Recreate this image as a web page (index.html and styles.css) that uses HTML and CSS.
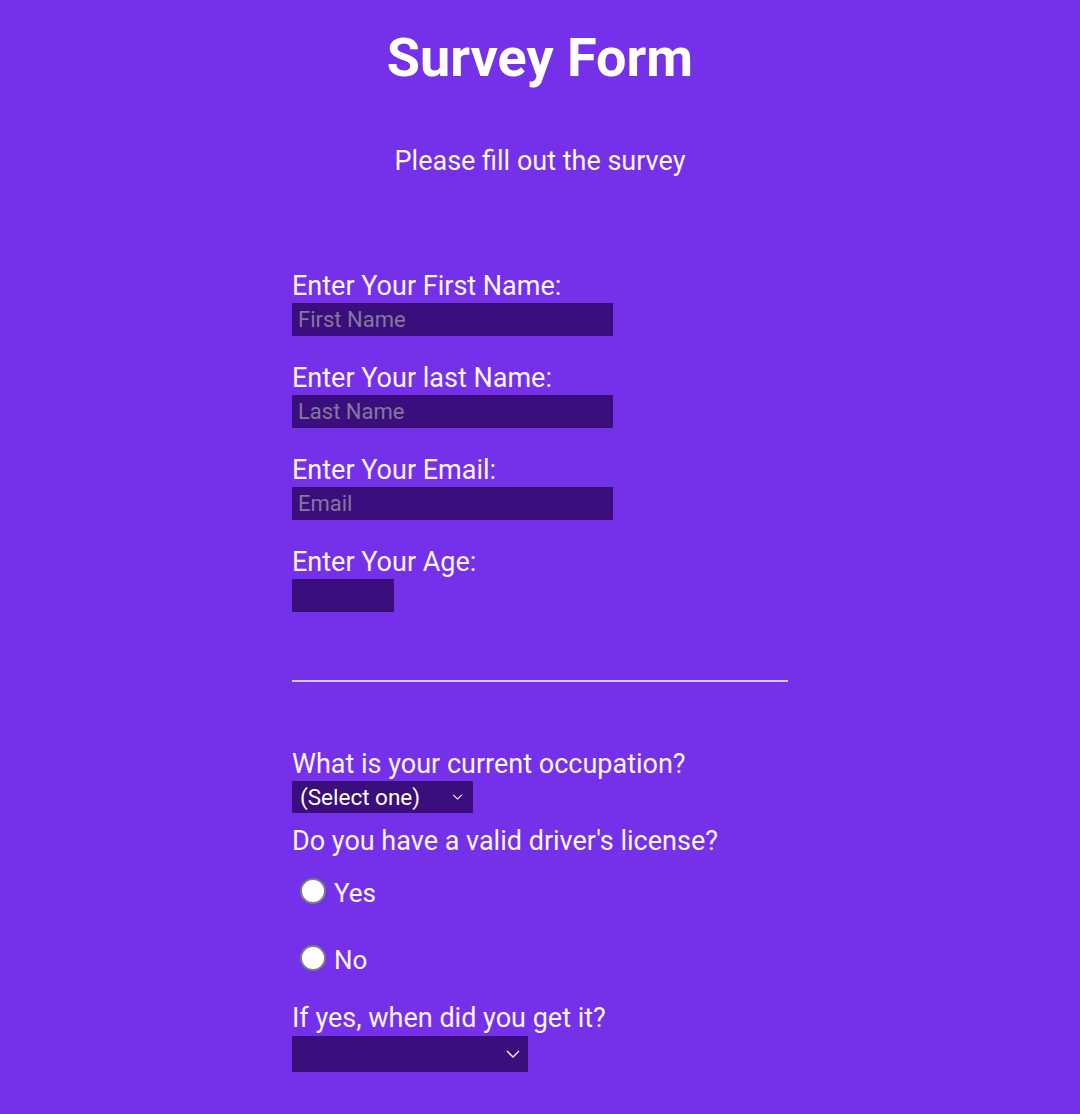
FILE: index.html
```html
<!DOCTYPE html>
<html lang="en">
<head>
<meta charset="utf-8">
<title>Survey Form</title>
<link rel="stylesheet" href="styles.css">
</head>
<body>
<header class="head">
  <h1 class="title">Survey Form</h1>
  <p class="subtitle">Please fill out the survey</p>
</header>
<form class="form">
  <div class="field">
    <label class="label" for="fname">Enter Your First Name:</label>
    <input class="text-input" id="fname" type="text" placeholder="First Name">
  </div>
  <div class="field">
    <label class="label" for="lname">Enter Your last Name:</label>
    <input class="text-input" id="lname" type="text" placeholder="Last Name">
  </div>
  <div class="field">
    <label class="label" for="email">Enter Your Email:</label>
    <input class="text-input" id="email" type="email" placeholder="Email">
  </div>
  <div class="field">
    <label class="label" for="age">Enter Your Age:</label>
    <input class="text-input age" id="age" type="number">
  </div>
  <div class="rule"></div>
  <div class="field-occ">
    <label class="label" for="occ">What is your current occupation?</label>
    <span class="select-wrap occ">
      <select class="select" id="occ">
        <option>(Select one)</option>
        <option>Student</option>
        <option>Employed</option>
        <option>Other</option>
      </select>
      <svg class="chev" width="12" height="7" viewBox="0 0 12 7"><path d="M1 1l5 5 5-5" fill="none" stroke="#fff" stroke-width="1.2"/></svg>
    </span>
  </div>
  <p class="label question">Do you have a valid driver's license?</p>
  <label class="radio-row first"><input class="radio" type="radio" name="lic"><span>Yes</span></label>
  <label class="radio-row second"><input class="radio" type="radio" name="lic"><span>No</span></label>
  <div class="field-when">
    <label class="label" for="when">If yes, when did you get it?</label>
    <span class="select-wrap when">
      <select class="select" id="when">
        <option></option>
      </select>
      <svg class="chev big" width="14" height="8" viewBox="0 0 14 8"><path d="M1 1l6 6 6-6" fill="none" stroke="#fff" stroke-width="1.3"/></svg>
    </span>
  </div>
</form>
</body>
</html>
```
FILE: styles.css
```css
html, body {
  margin: 0;
  padding: 0;
}
body {
  background: #7530e9;
  color: #fbf5ff;
  font-family: Roboto, "Noto Sans", sans-serif;
  padding-top: 26px;
  min-height: 1114px;
  box-sizing: border-box;
}
.head {
  text-align: center;
}
.title {
  margin: 0;
  font-size: 54px;
  line-height: 64px;
  font-weight: 700;
  color: #ffffff;
}
.subtitle {
  margin: 55px 0 0;
  font-size: 27px;
  line-height: 33px;
}
.form {
  width: 496px;
  margin: 93px auto 0;
}
.label {
  display: block;
  font-size: 27px;
  line-height: 31px;
  margin: 0;
}
.field {
  margin-bottom: 27px;
}
.text-input {
  display: block;
  box-sizing: border-box;
  width: 321px;
  height: 33px;
  margin-top: 1px;
  border: none;
  background: #3a0e7c;
  color: #fff;
  font-family: Roboto, sans-serif;
  font-size: 22px;
  padding: 0 6px;
  outline: none;
}
.text-input::placeholder {
  color: #85789b;
}
.text-input.age {
  width: 102px;
  -moz-appearance: textfield;
}
.text-input.age::-webkit-inner-spin-button,
.text-input.age::-webkit-outer-spin-button {
  -webkit-appearance: none;
  margin: 0;
}
.rule {
  height: 2px;
  background: #d6c6f6;
  margin-top: 68px;
}
.field-occ {
  margin-top: 67px;
}
.select-wrap {
  position: relative;
  display: block;
  margin-top: 1px;
}
.select {
  display: block;
  box-sizing: border-box;
  appearance: none;
  -webkit-appearance: none;
  border: none;
  border-radius: 0;
  background: #3a0e7c;
  color: #fff;
  font-family: Roboto, sans-serif;
  font-size: 22.5px;
  padding: 0 0 0 8px;
  outline: none;
}
.occ .select {
  width: 181px;
  height: 32px;
}
.when {
  margin-top: 2px;
}
.when .select {
  width: 236px;
  height: 36px;
}
.chev {
  position: absolute;
  top: 13px;
}
.occ .chev {
  left: 160px;
  top: 13px;
  width: 11px;
  height: 6px;
}
.when .chev {
  left: 214px;
  top: 14px;
}
.question {
  margin-top: 13px;
}
.radio-row {
  display: flex;
  align-items: flex-start;
  gap: 8px;
  padding-left: 8px;
  font-size: 26px;
  line-height: 31px;
}
.radio-row.first {
  margin-top: 21px;
}
.radio-row.second {
  margin-top: 36px;
}
.radio {
  appearance: none;
  -webkit-appearance: none;
  box-sizing: border-box;
  width: 26px;
  height: 26px;
  margin: 0;
  border: 2px solid #7d7d85;
  border-radius: 50%;
  background: #ffffff;
}
.field-when {
  margin-top: 27px;
}
```
